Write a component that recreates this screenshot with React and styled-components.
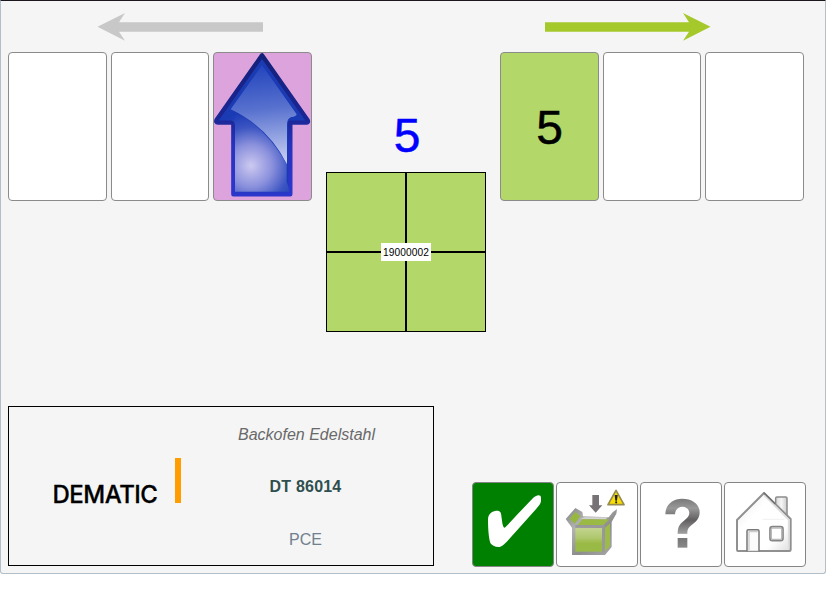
import React from "react";
import styled, { createGlobalStyle } from "styled-components";

const GlobalStyle = createGlobalStyle`
  body { margin: 0; background: #fff; }
  * { box-sizing: border-box; }
`;

const Screen = styled.main`
  position: relative;
  width: 826px;
  height: 574px;
  padding: 0 19px 0 7px;
  display: flex;
  flex-direction: column;
  justify-content: space-between;
  background: #f5f5f5;
  border: 1px solid #b0bfc9;
  border-top-color: #1c171d;
  border-radius: 0 0 3px 3px;
  font-family: "Liberation Sans", Arial, sans-serif;
  overflow: hidden;
`;

const TopNotch = styled.span`
  position: absolute;
  top: -1px;
  left: 24px;
  width: 3px;
  height: 1px;
  background: #e6e6ec;
`;

const Stations = styled.section`
  display: grid;
  grid-template-columns: 304px 188px 304px;
`;

const Lane = styled.div`
  display: flex;
  flex-direction: column;
`;

const Direction = styled.svg`
  display: block;
  width: 166px;
  height: 29px;
  margin: 12px 0 10px ${(p) => p.$offset}px;
  fill: ${(p) => p.$color};
`;

const Slots = styled.div`
  display: grid;
  grid-template-columns: 99px 98px 99px;
  column-gap: 4px;
`;

const Slot = styled.div`
  display: flex;
  align-items: center;
  justify-content: center;
  height: 149px;
  border: 1px solid #8b8b8b;
  border-radius: 4px;
  background: ${(p) => p.$fill || "#fff"};
  color: #000;
  font-size: 48px;
  line-height: 55px;
  -webkit-text-stroke: 0.5px currentColor;
  svg { display: block; width: 97px; height: 147px; }
`;

const SlotCount = styled.span`
  padding-top: 2px;
`;

const Source = styled.div`
  display: flex;
  flex-direction: column;
  align-items: center;
  padding-top: 107px;
`;

const Quantity = styled.div`
  height: 64px;
  padding-left: 2px;
  color: #0000ff;
  font-size: 48px;
  line-height: 55px;
  -webkit-text-stroke: 0.5px currentColor;
`;

const Carrier = styled.div`
  position: relative;
  display: grid;
  grid-template-columns: 80px 80px;
  grid-template-rows: 80px 80px;
`;

const Cell = styled.div`
  background: #b3d869;
  border: 1px solid #000;
`;

const CarrierLabel = styled.span`
  position: absolute;
  left: 55px;
  top: 71px;
  width: 50px;
  height: 18px;
  background: #fff;
  color: #000;
  font-size: 10.2px;
  letter-spacing: 0.1px;
  line-height: 19px;
  text-align: center;
`;

const Footer = styled.section`
  display: flex;
  justify-content: space-between;
  align-items: flex-end;
  padding-bottom: 6px;
`;

const ItemPanel = styled.div`
  display: grid;
  grid-template-columns: 172px 1fr;
  width: 426px;
  height: 160px;
  margin-bottom: 1px;
  border: 1px solid #000;
`;

const Brand = styled.div`
  display: flex;
  align-items: flex-end;
  justify-content: space-between;
  height: 96px;
  padding-left: 43.5px;
`;

const BrandName = styled.span`
  font-family: Inter, sans-serif;
  font-size: 24px;
  font-weight: 500;
  line-height: 16px;
  letter-spacing: -0.5px;
  white-space: nowrap;
  color: #000;
  -webkit-text-stroke: 0.3px #000;
`;

const BrandBar = styled.span`
  width: 6px;
  height: 45px;
  background: #ff9c00;
`;

const ItemInfo = styled.div`
  display: flex;
  flex-direction: column;
  align-items: center;
  padding: 19px 1px 0 0;
`;

const InfoLine = styled.div`
  height: ${(p) => p.$height || 52}px;
  padding-right: ${(p) => p.$shift || 0}px;
  font-size: 16px;
  line-height: 18px;
  letter-spacing: ${(p) => (p.$strong ? "0.2px" : "normal")};
  color: ${(p) => p.$color};
  font-weight: ${(p) => (p.$strong ? 700 : 400)};
  font-style: ${(p) => (p.$italic ? "italic" : "normal")};
`;

const Actions = styled.nav`
  display: flex;
  gap: 2px;
`;

const ActionButton = styled.button`
  width: 82px;
  height: 85px;
  padding: 0;
  border: 1px solid #858585;
  border-radius: 4px;
  background: ${(p) => p.$fill || "#fff"};
  svg { display: block; width: 80px; height: 83px; }
`;

function UpArrow() {
  return (
    <svg viewBox="27 24 291 441">
      <defs>
        <linearGradient id="rim" x1="0" y1="0" x2="0" y2="1">
          <stop offset="0" stopColor="#14217a" />
          <stop offset=".45" stopColor="#1b2695" />
          <stop offset=".65" stopColor="#2634bd" />
          <stop offset="1" stopColor="#2b37cb" />
        </linearGradient>
        <radialGradient id="glow" gradientUnits="userSpaceOnUse" cx="138" cy="362" r="160">
          <stop offset="0" stopColor="#cdc9f0" />
          <stop offset=".4" stopColor="#8a90dc" />
          <stop offset=".72" stopColor="#3c55c2" />
          <stop offset="1" stopColor="#1c3cb6" />
        </radialGradient>
        <linearGradient id="gloss" gradientUnits="userSpaceOnUse" x1="170" y1="60" x2="200" y2="350">
          <stop offset="0" stopColor="#2345bd" />
          <stop offset=".45" stopColor="#5771ce" />
          <stop offset="1" stopColor="#c6cdf2" />
        </linearGradient>
      </defs>
      <path d="M171 31L35 224Q31 233 39 233H85V448H256V233H305Q312 232 307 224Z" fill="#1b3bb5" stroke="url(#rim)" strokeWidth="13" strokeLinejoin="round" />
      <path d="M90 440V242Q89 226 75 225H49L78 195Q180 242 245 357V410Q251 425 253 440Z" fill="url(#glow)" />
      <path d="M171 61L275 208Q274 215 259 216Q247 220 246 236V358Q190 246 77 193Z" fill="url(#gloss)" />
      <path d="M48 225L78 194L92 202L88 226Z" fill="#1b3bb5" opacity=".65" />
    </svg>
  );
}

function CheckIcon() {
  return (
    <svg viewBox="24 24 240 249">
      <path d="M69 135C69 113 84 107 98 107C108 107 109 118 110 130C112 147 114 158 119 158C126 153 145 131 167 108L202 71C212 61 227 56 228 68V78C227 87 222 92 214 101L130 195C117 209 110 216 101 216C89 216 80 211 76 204C71 188 69 159 69 135Z" fill="#fff" />
    </svg>
  );
}

function BoxIcon() {
  return (
    <svg viewBox="276 24 240 249">
      <defs>
        <linearGradient id="boxFront" x1="0" y1="0" x2="0" y2="1">
          <stop offset="0" stopColor="#c3d48e" />
          <stop offset=".4" stopColor="#b0c870" />
          <stop offset=".65" stopColor="#9aba45" />
          <stop offset="1" stopColor="#9aba48" />
        </linearGradient>
        <linearGradient id="boxRim" x1="0" y1="0" x2="1" y2="1">
          <stop offset="0" stopColor="#858585" />
          <stop offset=".3" stopColor="#b2b2b2" />
          <stop offset=".6" stopColor="#8d8d8d" />
          <stop offset="1" stopColor="#ababab" />
        </linearGradient>
      </defs>
      <path d="M382 60H402V91H412L392 113L372 91H382Z" fill="#777275" />
      <path d="M302 132L331 99L352 111L354 124L431 127L443 112L456 102L454 116L440 141V216L420 240H321V158Z" fill="url(#boxRim)" />
      <path d="M331 159H411V230H331Z" fill="url(#boxFront)" />
      <path d="M420 158L435 145V213L420 229Z" fill="#9dbb49" />
      <path d="M314 131L331 111L346 124L329 146Z" fill="#96b840" />
      <path d="M337 151L352 133L433 133L414 151Z" fill="#9aba43" />
      <path d="M345 131L359 127H429L422 133Z" fill="#d5d5d5" />
      <path d="M331 154H415V232" fill="none" stroke="#999" strokeWidth="8" />
      <path d="M453 46L477 89H429Z" fill="#f9df00" stroke="#968b50" strokeWidth="5" strokeLinejoin="round" />
      <path d="M449 60H458L456 77H451Z" fill="#222017" />
      <circle cx="453.5" cy="82" r="3.2" fill="#222017" />
    </svg>
  );
}

function HelpIcon() {
  return (
    <svg viewBox="18 24 240 249">
      <defs>
        <linearGradient id="help" gradientUnits="userSpaceOnUse" x1="0" y1="70" x2="0" y2="218">
          <stop offset="0" stopColor="#777" />
          <stop offset=".2" stopColor="#999" />
          <stop offset=".44" stopColor="#625f60" />
          <stop offset=".69" stopColor="#9a9a9a" />
          <stop offset=".82" stopColor="#777" />
          <stop offset="1" stopColor="#898989" />
        </linearGradient>
      </defs>
      <g fill="url(#help)">
        <path d="M91 118C91 89 113 71 141 71C173 71 194 88 194 112C194 131 182 142 169 151C159 159 157 165 157 176H128C128 156 134 147 147 137C157 129 163 123 163 114C163 103 154 95 142 95C129 95 121 104 120 118Z" />
        <path d="M128 189H157V218H128Z" />
      </g>
    </svg>
  );
}

function HomeIcon() {
  return (
    <svg viewBox="270 24 240 249">
      <defs>
        <linearGradient id="wall" x1="0" y1="0" x2="1" y2="1">
          <stop offset="0" stopColor="#e6e6e6" />
          <stop offset=".35" stopColor="#fff" />
          <stop offset=".75" stopColor="#fff" />
          <stop offset="1" stopColor="#dedede" />
        </linearGradient>
        <linearGradient id="chimney" x1="0" y1="0" x2="1" y2="0">
          <stop offset="0" stopColor="#d5d5d5" />
          <stop offset=".5" stopColor="#f6f6f6" />
          <stop offset="1" stopColor="#ccc" />
        </linearGradient>
      </defs>
      <g strokeLinejoin="round" strokeLinecap="round">
        <path d="M422 85V70Q422 66 426 66H452Q456 66 456 70V120" fill="url(#chimney)" stroke="#8c8c8c" strokeWidth="4.5" />
        <path d="M387 54L467 132V224Q467 228 463 228H309Q306 228 306 224V135Z" fill="url(#wall)" stroke="#909090" strokeWidth="6" />
        <path d="M389 62L461 134V220" fill="none" stroke="#dedede" strokeWidth="5" />
        <path d="M387 54L420 86" stroke="#6c6c6c" strokeWidth="4" />
        <path d="M384 133H448" stroke="#f1f1f1" strokeWidth="3" />
        <path d="M336 227V168Q336 164 340 164H368Q372 164 372 168V227" fill="#fbfbfb" stroke="#777" strokeWidth="4.5" />
        <path d="M342 224V170H367" fill="none" stroke="#ccc" strokeWidth="4" />
        <rect x="405" y="155" width="39" height="42" rx="7" fill="#fff" stroke="#858585" strokeWidth="5" />
        <rect x="409" y="159" width="31" height="34" rx="4" fill="#fff" stroke="#bbb" strokeWidth="4" />
      </g>
    </svg>
  );
}

export default function App() {
  return (
    <>
      <GlobalStyle />
      <Screen>
        <TopNotch />
        <Stations>
          <Lane>
            <Direction viewBox="0 0 166 29" $offset={89} $color="#c8c8c8">
              <path d="M.5 13.7L28 0L22 9.2H166V18.7H22L28 27.8Z" />
            </Direction>
            <Slots>
              <Slot />
              <Slot />
              <Slot $fill="#dda3dc"><UpArrow /></Slot>
            </Slots>
          </Lane>
          <Source>
            <Quantity>5</Quantity>
            <Carrier>
              <Cell /><Cell /><Cell /><Cell />
              <CarrierLabel>19000002</CarrierLabel>
            </Carrier>
          </Source>
          <Lane>
            <Direction viewBox="0 0 166 29" $offset={45} $color="#a5c82b">
              <path d="M165.5 13.7L138 0L144 9.2H0V18.7H144L138 27.8Z" />
            </Direction>
            <Slots>
              <Slot $fill="#b3d869"><SlotCount>5</SlotCount></Slot>
              <Slot />
              <Slot />
            </Slots>
          </Lane>
        </Stations>
        <Footer>
          <ItemPanel>
            <Brand>
              <BrandName>DEMATIC</BrandName>
              <BrandBar />
            </Brand>
            <ItemInfo>
              <InfoLine $color="#696969" $italic>Backofen Edelstahl</InfoLine>
              <InfoLine $color="#2f4f4f" $height={53} $shift={2} $strong>DT 86014</InfoLine>
              <InfoLine $color="#708090" $shift={2}>PCE</InfoLine>
            </ItemInfo>
          </ItemPanel>
          <Actions>
            <ActionButton $fill="#008000" aria-label="Confirm"><CheckIcon /></ActionButton>
            <ActionButton aria-label="Report carton problem"><BoxIcon /></ActionButton>
            <ActionButton aria-label="Help"><HelpIcon /></ActionButton>
            <ActionButton aria-label="Home"><HomeIcon /></ActionButton>
          </Actions>
        </Footer>
      </Screen>
    </>
  );
}
